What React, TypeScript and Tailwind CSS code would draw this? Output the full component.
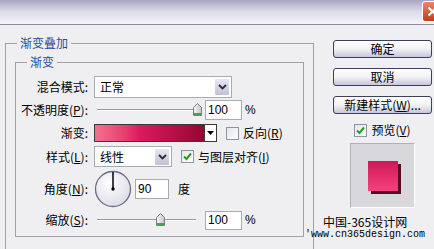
import React from "react";

function U({ children }: { children: React.ReactNode }) {
  return <span className="underline underline-offset-[1px]">{children}</span>;
}

function Arrow() {
  return (
    <div className="ml-auto mr-[1px] flex h-[18px] w-[16px] items-center justify-center rounded-[2px] border border-white bg-linear-to-b from-[#e8e8f0] to-[#c0c0d4]">
      <svg width="9" height="6" viewBox="0 0 9 6">
        <path d="M1 1 L4.5 4.5 L8 1" stroke="#2a2a3a" strokeWidth="1.8" fill="none" />
      </svg>
    </div>
  );
}

function Select({ className, value }: { className: string; value: string }) {
  return (
    <div className={`flex items-center border border-[#a5acb5] bg-white pl-[5px] ${className}`}>
      <span>{value}</span>
      <Arrow />
    </div>
  );
}

function Check({ on }: { on?: boolean }) {
  return (
    <div className="flex h-[13px] w-[13px] items-center justify-center border border-[#8c94a8] bg-linear-to-br from-[#e4e4ea] to-white">
      {on && (
        <svg width="9" height="9" viewBox="0 0 9 9">
          <path d="M1 4.5 L3.5 7 L8 1.5" stroke="#22a022" strokeWidth="2" fill="none" />
        </svg>
      )}
    </div>
  );
}

function Thumb() {
  return (
    <svg width="9" height="13" viewBox="0 0 9 13">
      <defs>
        <linearGradient id="thumbg" x1="0" x2="1">
          <stop offset="0" stopColor="#f6f6f6" />
          <stop offset="1" stopColor="#c4c4c8" />
        </linearGradient>
      </defs>
      <path d="M0.5 4.5 L4.5 0.5 L8.5 4.5 V12.5 H0.5 Z" fill="url(#thumbg)" stroke="#7c7c84" />
      <rect x="1" y="10" width="7" height="2" fill="#38b040" />
    </svg>
  );
}

function Slider({ thumb }: { thumb: string }) {
  return (
    <div className="relative h-[14px] w-[106px]">
      <div className="absolute left-[3px] top-[6px] h-[2px] w-[99px] border-t border-[#9a9a9e] border-b border-b-white" />
      <div className={`absolute top-0 ${thumb}`}>
        <Thumb />
      </div>
    </div>
  );
}

function NumBox({ value, className }: { value: string; className: string }) {
  return (
    <div className={`flex items-center border border-[#a9a9b4] bg-white pl-[2px] font-['Liberation_Sans',sans-serif] text-[12px] ${className}`}>
      {value}
    </div>
  );
}

function Label({ children }: { children: React.ReactNode }) {
  return <div className="mr-[6px] flex w-[65px] shrink-0 justify-end whitespace-nowrap">{children}</div>;
}

function Btn({ children }: { children: React.ReactNode }) {
  return (
    <div className="flex h-[18px] w-[99px] items-center justify-center rounded-[3px] border border-[#3e3e5e] bg-linear-to-b from-white via-[#f2f2f6] to-[#c6c6d8] leading-none">
      {children}
    </div>
  );
}

export default function App() {
  return (
    <div className="relative h-[249px] w-[434px] overflow-hidden bg-[#efeff2] font-['Noto_Sans_CJK_SC',sans-serif] text-[12px] leading-[14px] text-black">
      {/* title bar */}
      <div className="flex h-[25px] border-b border-[#8c8c9c] bg-linear-to-b from-[#a6a6c4] via-[#dedeea] to-[#f4f4f8]">
        <div className="-mr-[9px] ml-auto mt-[1px] flex h-[21px] w-[21px] items-center justify-center rounded-[3px] border border-white bg-linear-to-b from-[#ec8468] to-[#c23a1c]">
          <svg width="11" height="11" viewBox="0 0 11 11">
            <path d="M1.5 1.5 L9.5 9.5 M9.5 1.5 L1.5 9.5" stroke="white" strokeWidth="2" />
          </svg>
        </div>
      </div>

      <div className="flex pt-[11px]">
        <fieldset className="ml-[5px] h-[230px] w-[309px] shrink-0 border border-[#a0a0a8] pl-[9px] pr-[9px] pt-[5px]">
          <legend className="ml-[2px] px-[3px] leading-[14px] text-[#1f4f99]">渐变叠加</legend>

          <fieldset className="w-[289px] border border-[#a0a0a8] pb-[6px] pl-[7px] pt-[7px]">
            <legend className="ml-[4px] px-[3px] leading-[14px] text-[#1f4f99]">渐变</legend>

            <div className="flex flex-col">
              <div className="flex h-[22px] items-center">
                <Label>混合模式:</Label>
                <Select className="h-[22px] w-[138px]" value="正常" />
              </div>

              <div className="mt-[1px] flex h-[22px] items-center">
                <Label>
                  不透明度(<U>P</U>):
                </Label>
                <Slider thumb="left-[99px]" />
                <NumBox className="ml-[5px] h-[20px] w-[37px]" value="100" />
                <span className="ml-[3px] font-['Liberation_Sans',sans-serif]">%</span>
              </div>

              <div className="mt-[2px] flex h-[20px] items-center">
                <Label>渐变:</Label>
                <div className="flex h-[18px]">
                  <div className="w-[111px] border border-[#3a3a3a] bg-linear-to-r from-[#f4708f] via-[#dc1a60] via-40% to-[#960632]" />
                  <div className="flex w-[12px] items-center justify-center border border-l-0 border-[#3a3a3a] bg-white">
                    <svg width="7" height="4" viewBox="0 0 7 4">
                      <path d="M0 0 H7 L3.5 4 Z" fill="#000" />
                    </svg>
                  </div>
                </div>
                <div className="ml-[9px]">
                  <Check />
                </div>
                <span className="ml-[4px]">
                  反向(<U>R</U>)
                </span>
              </div>

              <div className="mt-[3px] flex h-[21px] items-center">
                <Label>
                  样式(<U>L</U>):
                </Label>
                <Select className="h-[21px] w-[78px]" value="线性" />
                <div className="ml-[9px]">
                  <Check on />
                </div>
                <span className="ml-[4px]">
                  与图层对齐(<U>I</U>)
                </span>
              </div>

              <div className="mt-[3px] flex h-[38px] items-center">
                <Label>
                  角度(<U>N</U>):
                </Label>
                <svg width="38" height="38" viewBox="0 0 38 38">
                  <defs>
                    <radialGradient id="dialg" cx="0.4" cy="0.35" r="0.75">
                      <stop offset="0" stopColor="#ffffff" />
                      <stop offset="1" stopColor="#d8d8e4" />
                    </radialGradient>
                  </defs>
                  <circle cx="19" cy="19" r="17.5" fill="url(#dialg)" stroke="#6c6c86" strokeWidth="1.3" />
                  <line x1="19" y1="2" x2="19" y2="19" stroke="#000" strokeWidth="1.5" />
                  <circle cx="19" cy="19" r="1.7" fill="#000" />
                </svg>
                <NumBox className="ml-[3px] h-[20px] w-[34px]" value="90" />
                <span className="ml-[9px]">度</span>
              </div>

              <div className="mt-[2px] flex h-[20px] items-center">
                <Label>
                  缩放(<U>S</U>):
                </Label>
                <Slider thumb="left-[62px]" />
                <NumBox className="ml-[5px] h-[19px] w-[37px]" value="100" />
                <span className="ml-[3px] font-['Liberation_Sans',sans-serif]">%</span>
              </div>
            </div>
          </fieldset>
        </fieldset>

        <div className="ml-[19px] mt-[4px] flex w-[99px] shrink-0 flex-col">
          <Btn>确定</Btn>
          <div className="mt-[10px]">
            <Btn>取消</Btn>
          </div>
          <div className="mt-[10px]">
            <Btn>
              新建样式(<U>W</U>)...
            </Btn>
          </div>
          <div className="mt-[9px] flex h-[14px] items-center justify-center gap-[4px]">
            <Check on />
            <span>
              预览(<U>V</U>)
            </span>
          </div>
          <div className="mx-auto mt-[6px] flex h-[65px] w-[65px] items-center justify-center border border-t-[#b0b0b6] border-l-[#b0b0b6] border-r-white border-b-white bg-[#d8d8dc]">
            <div className="h-[30px] w-[30px] bg-linear-to-b from-[#d0145a] to-[#f4407c] shadow-[3px_3px_0_#5a0a22]" />
          </div>
        </div>
      </div>

      {/* watermark */}
      <div className="absolute left-[305px] top-[215px] flex flex-col">
        <span className="ml-[18px] leading-[13px]">中国-365设计网</span>
        <span className="font-['Liberation_Mono',monospace] text-[10px] leading-[13px]">'www.cn365design.com</span>
      </div>
    </div>
  );
}
